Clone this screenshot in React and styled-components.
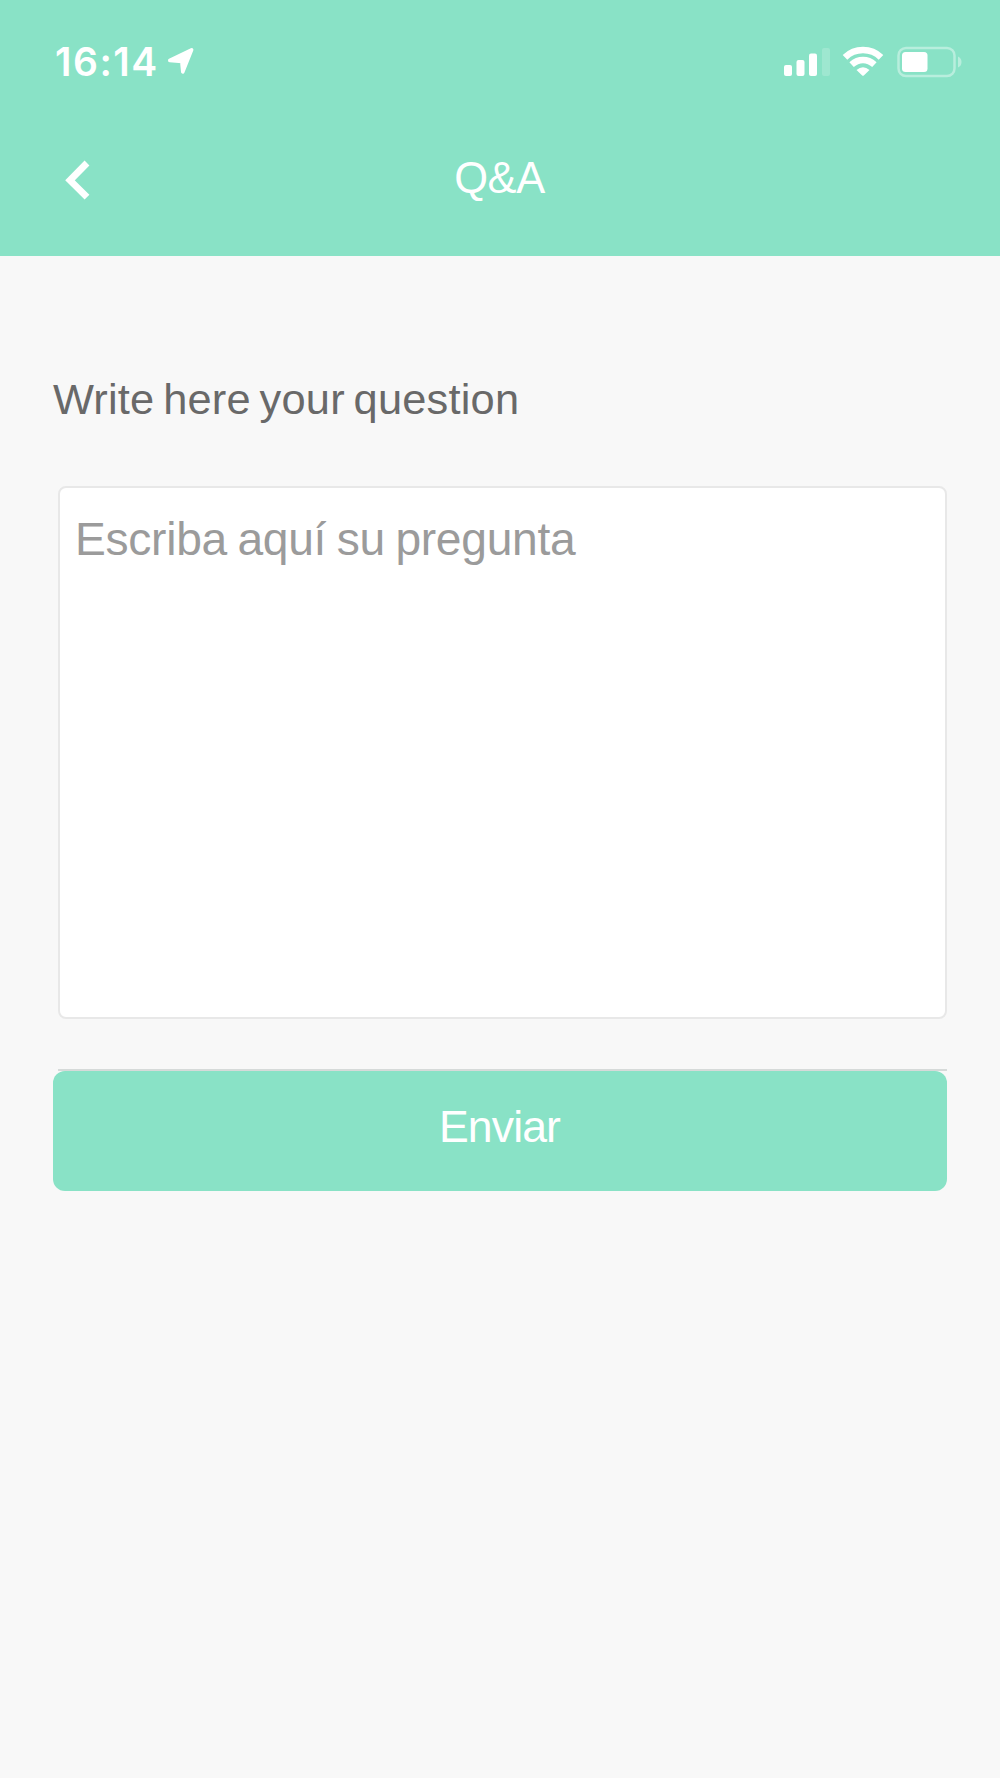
import React from "react";
import styled, { createGlobalStyle } from "styled-components";

const Global = createGlobalStyle`
  *, *::before, *::after { box-sizing: border-box; }
  body { margin: 0; background: #f8f8f8; }
`;

const Screen = styled.div`
  width: 1000px;
  height: 1778px;
  background: #f8f8f8;
  font-family: "Liberation Sans", Arial, sans-serif;
  overflow: hidden;
`;

const Header = styled.header`
  height: 256px;
  background: #89e2c6;
  color: #fff;
`;

const StatusBar = styled.div`
  display: flex;
  justify-content: space-between;
  height: 120px;
  padding: 40px 36px 0 55px;
`;

const StatusGroup = styled.div`
  display: flex;
  align-items: flex-start;
`;

const Time = styled.span`
  font: 600 39px/44px Inter, sans-serif;
  letter-spacing: 1.5px;
`;

const Glyph = styled.svg`
  display: block;
  flex: none;
  margin-left: ${(p) => p.$left || 0}px;
  margin-top: ${(p) => p.$top || 0}px;
`;

const NavBar = styled.nav`
  display: grid;
  grid-template-columns: 1fr auto 1fr;
  padding: 33px 66px 0 65px;
`;

const BackButton = styled.button`
  width: 26px;
  height: 40px;
  margin-top: 7px;
  padding: 0;
  border: 0;
  background: none;
`;

const Title = styled.h1`
  margin: 0;
  font-size: 43.5px;
  line-height: 50px;
  font-weight: 400;
  letter-spacing: -0.4px;
`;

const Form = styled.form`
  display: flex;
  flex-direction: column;
  padding: 118px 53px 0;
`;

const Label = styled.label`
  color: #696969;
  font-size: 43.4px;
  line-height: 50px;
  letter-spacing: 0.2px;
  word-spacing: -3.5px;
`;

const Question = styled.textarea`
  height: 533px;
  margin: 62px 0 0 5px;
  padding: 25px 15px;
  border: 2px solid #e8e8e8;
  border-radius: 8px;
  resize: none;
  outline: none;
  background: #fff;
  font-family: inherit;
  font-size: 46.2px;
  line-height: 52px;
  letter-spacing: -0.3px;
  word-spacing: -2px;
  &::placeholder { color: #9b9b9b; opacity: 1; }
`;

const Divider = styled.hr`
  width: 889px;
  height: 2px;
  margin: 50px 0 0 5px;
  border: 0;
  background: #d6dad9;
`;

const Submit = styled.button`
  height: 120px;
  width: 894px;
  padding: 0 1px 8px 0;
  border: 0;
  border-radius: 12px;
  background: #89e2c6;
  color: #fff;
  font-family: inherit;
  font-size: 44.6px;
  line-height: 52px;
  letter-spacing: -0.9px;
`;

export default function App() {
  return (
    <Screen>
      <Global />
      <Header>
        <StatusBar>
          <StatusGroup>
            <Time>16:14</Time>
            <Glyph $left={8} $top={7} width="28" height="28" viewBox="0 0 28 28">
              <path d="M2.8 13.4 24.6 2.8 15.8 24.8 14.8 14.4Z" fill="#fff" stroke="#fff" strokeWidth="3.6" strokeLinejoin="round" />
            </Glyph>
          </StatusGroup>
          <StatusGroup>
            <Glyph $top={7} width="48" height="30" viewBox="0 0 48 30" fill="#fff">
              <rect x="0" y="18" width="8" height="11" rx="2" />
              <rect x="12.5" y="13" width="8" height="16" rx="2" />
              <rect x="25" y="6.5" width="8" height="22.5" rx="2" />
              <rect x="38" y="1" width="8" height="28" rx="2" opacity=".18" />
            </Glyph>
            <Glyph $left={10} $top={5} width="42" height="32" viewBox="0 0 42 32" fill="none" stroke="#fff" strokeWidth="6.6">
              <path d="M3 12.3C13 2.6 29 2.6 39 12.3" />
              <path d="M9.6 19.6C16.5 13.4 25.5 13.4 32.4 19.6" />
              <path d="M14.5 25Q21 19.6 27.5 25L21.8 30.4Q21 31 20.2 30.4Z" fill="#fff" stroke="none" />
            </Glyph>
            <Glyph $left={13} $top={6} width="67" height="32" viewBox="0 0 67 32">
              <rect x="1.5" y="2" width="56" height="28" rx="7.5" fill="none" stroke="#b8eedd" strokeWidth="2.5" />
              <rect x="5" y="6" width="25.5" height="20" rx="3.5" fill="#fff" />
              <path d="M61 10.5Q64.5 12 64.5 16T61 21.5Z" fill="#b8eedd" />
            </Glyph>
          </StatusGroup>
        </StatusBar>
        <NavBar>
          <BackButton type="button" aria-label="Back">
            <Glyph width="26" height="40" viewBox="0 0 26 40">
              <path d="M22 3 5 20.3 22 37.2" fill="none" stroke="#fff" strokeWidth="6.8" />
            </Glyph>
          </BackButton>
          <Title>Q&amp;A</Title>
        </NavBar>
      </Header>
      <Form>
        <Label htmlFor="question">Write here your question</Label>
        <Question id="question" placeholder="Escriba aquí su pregunta" />
        <Divider />
        <Submit type="button">Enviar</Submit>
      </Form>
    </Screen>
  );
}
